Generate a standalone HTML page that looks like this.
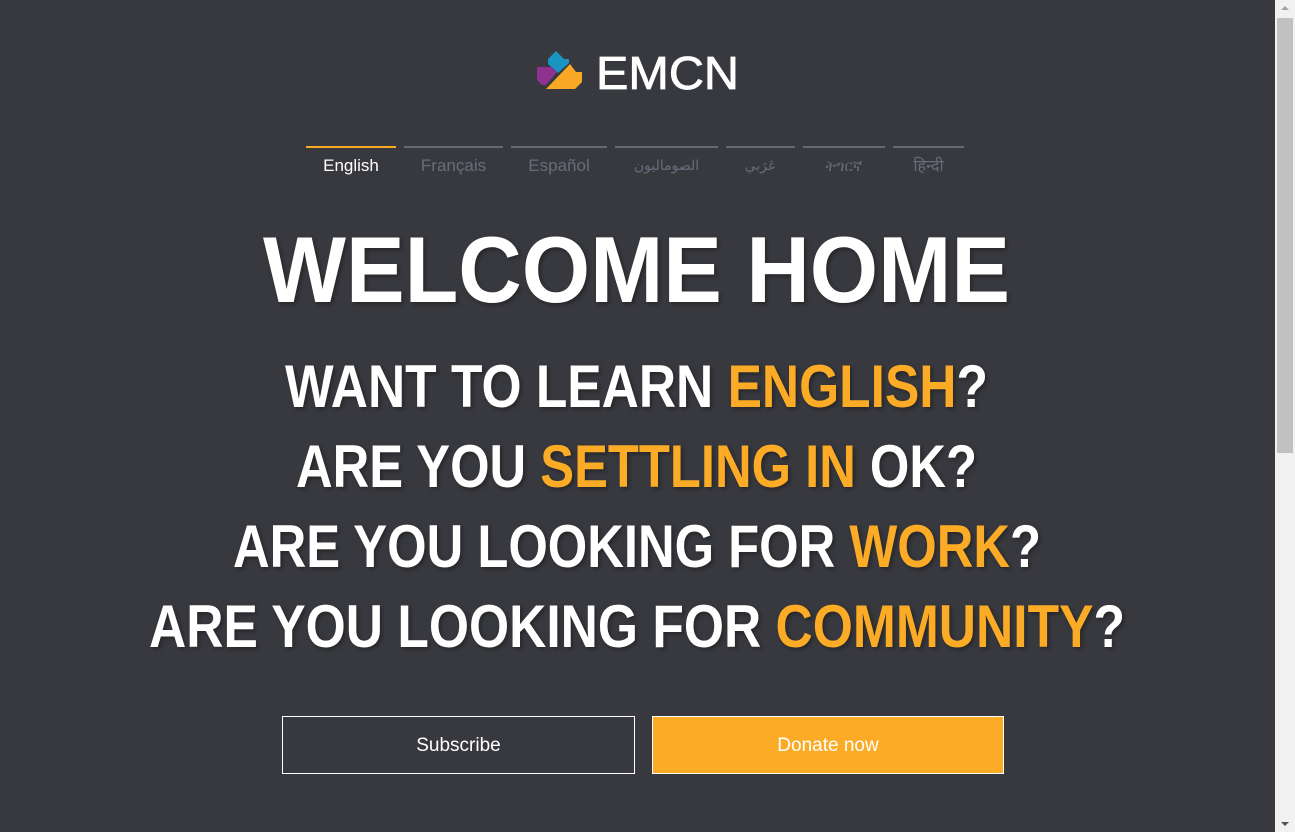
<!DOCTYPE html>
<html><head><meta charset="utf-8"><style>
html,body{margin:0;padding:0}
body{width:1295px;height:832px;background:#38393e;position:relative;overflow:hidden;font-family:"Liberation Sans",sans-serif}
.tab{position:absolute;top:146px;height:40px;border-top:2px solid #666a70;text-align:center;font-size:17px;color:#666d7a;line-height:36px}
.tab.on{border-top-color:#f9a825;color:#fff}
.btn{position:absolute;top:716px;height:58px;box-sizing:border-box;text-align:center;line-height:58px;color:#fff;font-size:19px}
.sb{position:absolute;right:0;top:0;width:20px;height:832px;background:#f1f1f1}
</style></head><body>
<svg width="1275" height="832" style="position:absolute;left:0;top:0">
<polygon points="548,59 556,51 564,59 569,59 569,63 558,73 548,64" fill="#1a95c2"/>
<polygon points="537,67 552,67 557,72 546,85 542,85 537,80" fill="#8e3291"/>
<polygon points="546,89 570,64 576,72 582,72 582,82 575,89" fill="#f9a825"/>
<text x="596" y="89" font-size="46" fill="#fff" font-family="Liberation Sans" stroke="#fff" stroke-width="0.8" textLength="143" lengthAdjust="spacingAndGlyphs">EMCN</text>
<g font-family="Liberation Sans" font-weight="bold" fill="#fff" style="filter:drop-shadow(2px 2px 2px rgba(0,0,0,.35))">
<text x="263" y="302" font-size="94" textLength="747" lengthAdjust="spacingAndGlyphs">WELCOME HOME</text>
<text x="285" y="407" font-size="60" textLength="703" lengthAdjust="spacingAndGlyphs">WANT TO LEARN <tspan fill="#fbab25">ENGLISH</tspan>?</text>
<text x="296" y="487" font-size="60" textLength="681" lengthAdjust="spacingAndGlyphs">ARE YOU <tspan fill="#fbab25">SETTLING IN</tspan> OK?</text>
<text x="233" y="567" font-size="60" textLength="808" lengthAdjust="spacingAndGlyphs">ARE YOU LOOKING FOR <tspan fill="#fbab25">WORK</tspan>?</text>
<text x="149" y="647" font-size="60" textLength="976" lengthAdjust="spacingAndGlyphs">ARE YOU LOOKING FOR <tspan fill="#fbab25">COMMUNITY</tspan>?</text>
</g>
</svg>
<div class="tab on" style="left:306px;width:90px">English</div>
<div class="tab" style="left:404px;width:99px">Français</div>
<div class="tab" style="left:511px;width:96px">Español</div>
<div class="tab" style="left:615px;width:103px;font-family:'DejaVu Sans',sans-serif;font-size:14px">الصوماليون</div>
<div class="tab" style="left:726px;width:69px;font-family:'DejaVu Sans',sans-serif;font-size:14px">عَرَبي</div>
<div class="tab" style="left:803px;width:82px;font-family:'DejaVu Sans',sans-serif;font-size:15px">ትግርኛ</div>
<div class="tab" style="left:893px;width:71px;font-family:'DejaVu Sans',sans-serif;font-size:16px">हिन्दी</div>
<div class="btn" style="left:282px;width:353px;border:1px solid #fff">Subscribe</div>
<div class="btn" style="left:652px;width:352px;background:#fbab25;border:1px solid #fff">Donate now</div>
<div class="sb"><div style="position:absolute;left:2px;top:18px;width:16px;height:435px;background:#c1c1c1"></div>
<div style="position:absolute;left:6px;top:6px;border:4px solid transparent;border-bottom:4px solid #a3a3a3;border-top:0"></div>
<div style="position:absolute;left:6px;bottom:6px;border:4px solid transparent;border-top:4px solid #505050;border-bottom:0"></div></div>
</body></html>
